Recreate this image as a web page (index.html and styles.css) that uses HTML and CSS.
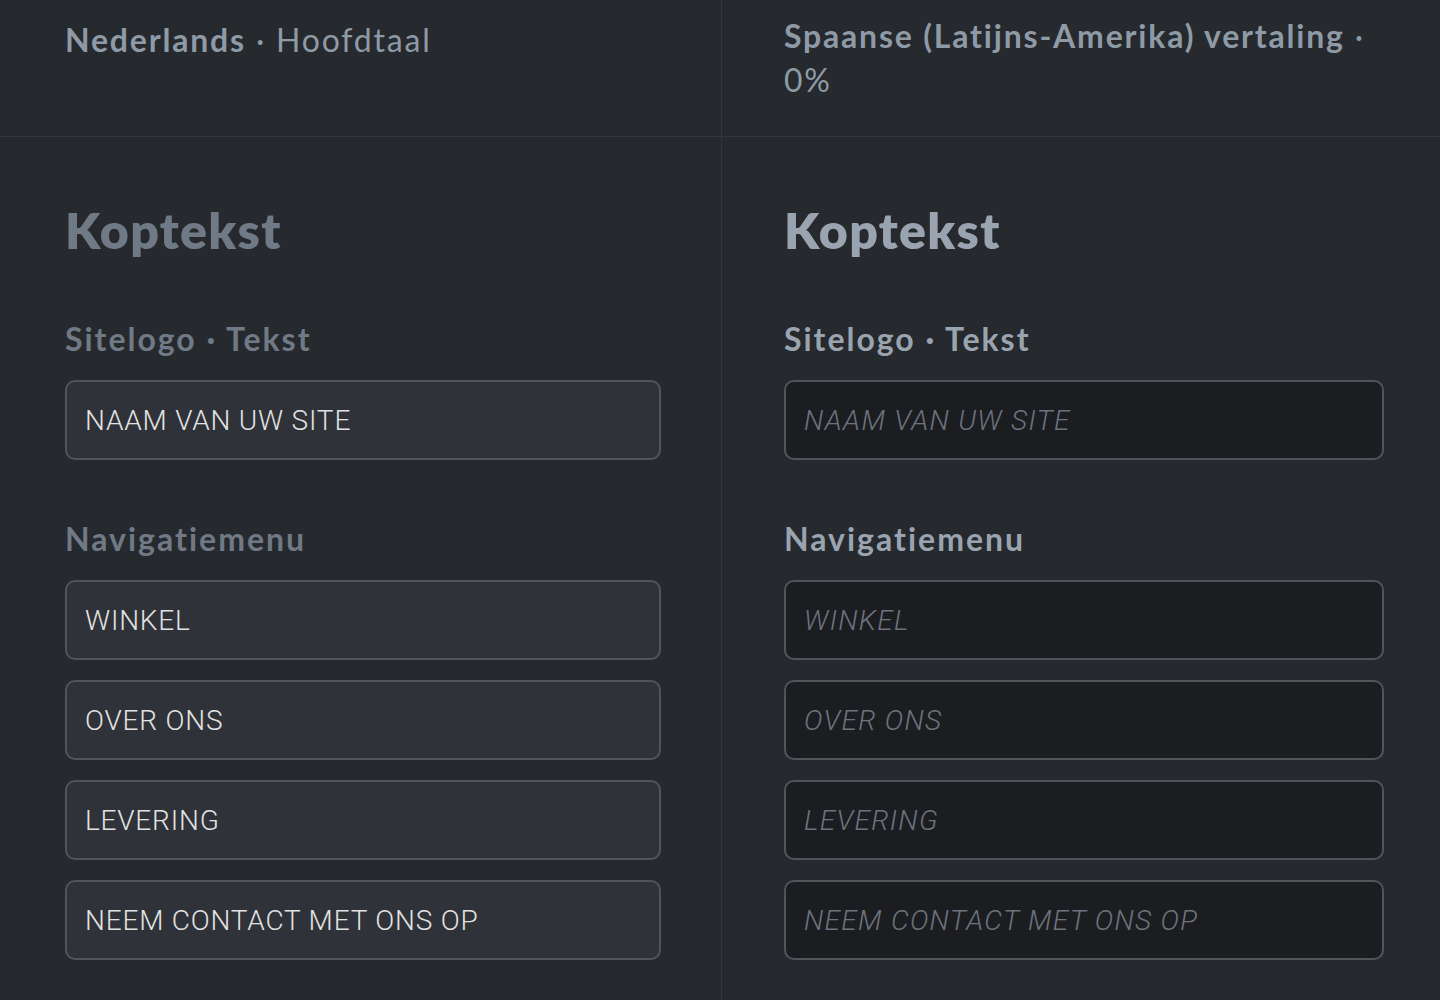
FILE: index.html
```html
<!DOCTYPE html>
<html lang="nl">
<head>
    <meta charset="UTF-8">
    <meta name="viewport" content="width=device-width, initial-scale=1.0">
    <title>Vertalingen</title>
    <link rel="stylesheet" href="styles.css">
</head>
<body>
    <div class="editor">
        <div class="col-head">
            <p class="lang"><strong>Nederlands</strong><span> · </span><span>Hoofdtaal</span></p>
        </div>
        <div class="col-head">
            <p class="lang"><strong>Spaanse (Latijns-Amerika) vertaling</strong><span> ·</span> <span>0%</span></p>
        </div>

        <div class="col-body source">
            <h2 class="section-title">Koptekst</h2>

            <div class="field">
                <label class="field-label">Sitelogo · Tekst</label>
                <input class="text-input" type="text" value="NAAM VAN UW SITE">
            </div>

            <div class="field">
                <label class="field-label">Navigatiemenu</label>
                <input class="text-input" type="text" value="WINKEL">
                <input class="text-input" type="text" value="OVER ONS">
                <input class="text-input" type="text" value="LEVERING">
                <input class="text-input" type="text" value="NEEM CONTACT MET ONS OP">
            </div>
        </div>

        <div class="col-body target">
            <h2 class="section-title">Koptekst</h2>

            <div class="field">
                <label class="field-label">Sitelogo · Tekst</label>
                <input class="text-input" type="text" placeholder="NAAM VAN UW SITE">
            </div>

            <div class="field">
                <label class="field-label">Navigatiemenu</label>
                <input class="text-input" type="text" placeholder="WINKEL">
                <input class="text-input" type="text" placeholder="OVER ONS">
                <input class="text-input" type="text" placeholder="LEVERING">
                <input class="text-input" type="text" placeholder="NEEM CONTACT MET ONS OP">
            </div>
        </div>
    </div>
</body>
</html>
```

FILE: styles.css
```css
body {
    margin: 0;
    padding: 0;
    background-color: #26292d;
    font-family: Lato, "Noto Sans", sans-serif;
    color: #8f9aa7;
    overflow: hidden;
}

.editor {
    display: grid;
    grid-template-columns: 722px 1fr;
    grid-template-rows: 137px 1fr;
    min-height: 1000px;
}

.col-head {
    border-bottom: 1px solid #33363b;
    padding: 14px 56px 0 65px;
}

.col-head:first-child,
.col-body.source {
    border-right: 1px solid #33363b;
}

.col-head:first-child .lang {
    margin-top: 4px;
}

.col-head:nth-child(2) {
    padding-left: 62px;
}

.lang {
    margin: 0;
    font-size: 32px;
    line-height: 44px;
    letter-spacing: 1.8px;
    font-weight: 400;
}

.lang strong {
    font-weight: 700;
}

.col-body {
    padding: 63px 60px 0 65px;
}

.col-body.target {
    padding-left: 62px;
    padding-right: 56px;
}

.section-title {
    margin: 0 0 57px 0;
    font-size: 50px;
    line-height: 60px;
    font-weight: 800;
    letter-spacing: 1.3px;
    color: #707a86;
}

.field {
    display: flex;
    flex-direction: column;
    gap: 20px;
    margin-bottom: 57px;
}

.field-label {
    font-size: 32px;
    line-height: 44px;
    font-weight: 700;
    letter-spacing: 2px;
    color: #707a86;
    margin-bottom: -1px;
}

.target .section-title,
.target .field-label {
    color: #9aa4b0;
}

.text-input {
    box-sizing: border-box;
    height: 80px;
    width: 100%;
    margin: 0;
    padding: 0 18px;
    border: 2px solid #50555c;
    border-radius: 10px;
    background-color: #2f3238;
    color: #e2e2e2;
    font-family: Roboto, "Liberation Sans", sans-serif;
    font-size: 28px;
    font-weight: 300;
    letter-spacing: 0.8px;
    outline: none;
}

.target .text-input {
    background-color: #1c1d21;
    letter-spacing: 1.3px;
}

.text-input::placeholder {
    color: #6c737d;
    font-style: italic;
    opacity: 1;
}
```
